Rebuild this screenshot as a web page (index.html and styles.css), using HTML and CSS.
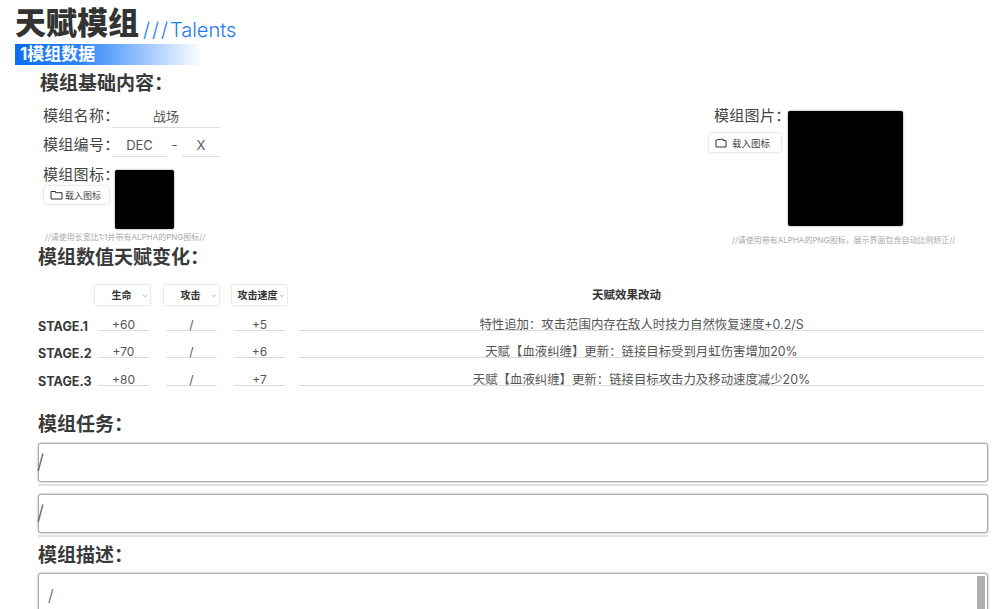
FILE: index.html
```html
<!DOCTYPE html>
<html lang="zh-CN">
  <head>
    <meta charset="UTF-8" />
    <title>天赋模组</title>
    <link rel="stylesheet" href="styles.css">
  </head>
  <body>
    <div class="page">
      <div class="title-row">
        <h1>天赋模组</h1>
        <span class="title-en"><span class="title-slashes">///</span>Talents</span>
      </div>
      <div class="section-bar">1模组数据</div>

      <h2 class="basic-title">模组基础内容：</h2>

      <div class="basic">
        <div class="basic-left">
          <div class="field-row">
            <span class="field-label">模组名称：</span>
            <span class="field-value name-field">战场</span>
          </div>
          <div class="field-row code-row">
            <span class="field-label">模组编号：</span>
            <span class="field-value dec-field">DEC</span>
            <span class="code-dash">-</span>
            <span class="field-value x-field">X</span>
          </div>
          <div class="icon-row">
            <div class="icon-side">
              <span class="field-label">模组图标：</span>
              <button class="load-btn small-btn">
                <svg width="13" height="10" viewBox="0 0 13 10"><path d="M1 9V1.5h4.5v1.2H12V9z" fill="none" stroke="#333" stroke-width="1"/></svg>
                载入图标
              </button>
            </div>
            <div class="black-box icon-box"></div>
          </div>
          <p class="hint icon-hint">//请使用长宽比1:1并带有ALPHA的PNG图标//</p>
        </div>

        <div class="basic-right">
          <div class="image-row">
            <div class="image-side">
              <span class="field-label">模组图片：</span>
              <button class="load-btn">
                <svg width="12" height="10" viewBox="0 0 12 10"><path d="M1 9V2l7-1v1.5h3V9z" fill="none" stroke="#333" stroke-width="1"/></svg>
                载入图标
              </button>
            </div>
            <div class="black-box image-box"></div>
          </div>
          <p class="hint image-hint">//请使用带有ALPHA的PNG图标，展示界面包含自动比例矫正//</p>
        </div>
      </div>

      <h2 class="stats-title">模组数值天赋变化：</h2>

      <div class="stats">
        <div class="stats-row stats-head">
          <span class="stage"></span>
          <div class="select">生命<i class="caret"></i></div>
          <div class="select">攻击<i class="caret"></i></div>
          <div class="select select-long">攻击速度<i class="caret"></i></div>
          <div class="effect-head">天赋效果改动</div>
        </div>
        <div class="stats-row">
          <span class="stage">STAGE.1</span>
          <span class="cell">+60</span>
          <span class="cell">/</span>
          <span class="cell">+5</span>
          <span class="cell effect">特性追加：攻击范围内存在敌人时技力自然恢复速度+0.2/S</span>
        </div>
        <div class="stats-row">
          <span class="stage">STAGE.2</span>
          <span class="cell">+70</span>
          <span class="cell">/</span>
          <span class="cell">+6</span>
          <span class="cell effect">天赋【血液纠缠】更新：链接目标受到月虹伤害增加20%</span>
        </div>
        <div class="stats-row">
          <span class="stage">STAGE.3</span>
          <span class="cell">+80</span>
          <span class="cell">/</span>
          <span class="cell">+7</span>
          <span class="cell effect">天赋【血液纠缠】更新：链接目标攻击力及移动速度减少20%</span>
        </div>
      </div>

      <h2 class="task-title">模组任务：</h2>
      <div class="text-box">/</div>
      <div class="box-line"></div>
      <div class="text-box">/</div>
      <div class="box-line"></div>

      <h2 class="desc-title">模组描述：</h2>
      <div class="desc-box">
        <span>/</span>
        <div class="scroll-thumb"></div>
      </div>
    </div>
  </body>
</html>
```

FILE: styles.css
```css
* {
  margin: 0;
  padding: 0;
  box-sizing: border-box;
}

html,
body {
  height: 609px;
  overflow: hidden;
}

body {
  font-family: Inter, "Noto Sans CJK SC", sans-serif;
  background: #fff;
  color: #3a3a3a;
}

.page {
  height: 609px;
  overflow: hidden;
  padding: 3px 12px 0 15px;
}

.title-row {
  display: flex;
  align-items: flex-end;
  height: 39px;
}

h1 {
  font-size: 31px;
  line-height: 39px;
  font-weight: 900;
  color: #333;
}

.title-en {
  font-size: 20px;
  line-height: 23px;
  font-weight: 300;
  color: #1a7cf0;
  margin-left: 4px;
}

.title-slashes {
  letter-spacing: 2px;
}

.section-bar {
  width: 187px;
  height: 21px;
  margin-top: 2px;
  padding-left: 5px;
  font-size: 17px;
  line-height: 21px;
  font-weight: 700;
  color: #fff;
  background: linear-gradient(90deg, #0a6cf5 0%, #2f86fa 35%, rgba(255, 255, 255, 0) 100%);
}

h2 {
  font-size: 19px;
  font-weight: 700;
  line-height: 24px;
  color: #3a3a3a;
}

.basic-title {
  margin: 7px 0 0 25px;
}

.basic {
  display: flex;
  justify-content: space-between;
  padding-left: 28px;
  padding-right: 31px;
}

.field-row {
  display: flex;
  align-items: flex-end;
  height: 30px;
  margin-top: 2px;
}

.field-row.code-row {
  height: 29px;
  margin-top: 0;
}

.field-label {
  font-size: 15px;
  line-height: 20px;
  letter-spacing: 0.3px;
  color: #444;
  white-space: nowrap;
}

.field-row .field-label {
  width: 69px;
  margin-bottom: 2px;
}

.field-value {
  height: 20px;
  font-size: 13px;
  line-height: 17px;
  text-align: center;
  color: #555;
  border-bottom: 1px solid #ddd;
}

.name-field {
  width: 108px;
}

.dec-field {
  width: 55px;
}

.code-dash {
  width: 15px;
  height: 20px;
  font-size: 13px;
  line-height: 17px;
  text-align: center;
  color: #555;
}

.x-field {
  width: 38px;
}

.icon-row {
  display: flex;
  margin-top: 13px;
}

.icon-side {
  display: flex;
  flex-direction: column;
  width: 72px;
  margin-top: -5px;
}

.load-btn {
  display: flex;
  align-items: center;
  gap: 5px;
  width: 72px;
  height: 19px;
  padding-left: 6px;
  font-family: inherit;
  font-size: 9.5px;
  color: #444;
  background: #fff;
  border: none;
  border-radius: 2px;
  box-shadow: 0 0 2px rgba(0, 0, 0, 0.3);
}

.small-btn {
  width: 65px;
  height: 18px;
  gap: 2px;
  margin: 1px 0 0 1px;
  font-size: 9px;
}

.black-box {
  background: #000;
  border-radius: 2px;
  box-shadow: 0 0 2px rgba(0, 0, 0, 0.5);
}

.icon-box {
  width: 59px;
  height: 59px;
}

.hint {
  font-size: 8px;
  line-height: 10px;
  color: #aaa;
  white-space: nowrap;
}

.icon-hint {
  margin: 3px 0 0 2px;
}

.basic-right {
  width: 248px;
  padding-top: 15px;
}

.image-row {
  display: flex;
}

.image-side {
  width: 79px;
  margin-top: -5px;
}

.image-side .field-label {
  display: block;
  margin: 0 0 7px 5px;
}

.image-box {
  width: 115px;
  height: 115px;
}

.image-hint {
  margin: 9px 0 0 23px;
}

.stats-title {
  margin: 1px 0 0 23px;
}

.stats {
  margin: 15px 0 0 23px;
}

.stats-row {
  display: flex;
  align-items: flex-end;
  height: 27.5px;
}

.stats-head {
  height: 20px;
  margin-bottom: -2px;
}

.stage {
  width: 60px;
  font-size: 12.6px;
  line-height: 15px;
  font-weight: 700;
  color: #3a3a3a;
  margin-bottom: -3px;
}

.select {
  position: relative;
  width: 55px;
  height: 20px;
  margin-left: -3px;
  margin-right: 16px;
  font-size: 10px;
  font-weight: 700;
  line-height: 20px;
  text-align: center;
  padding-right: 2px;
  color: #333;
  background: #fff;
  box-shadow: 0 0 2px rgba(0, 0, 0, 0.25);
}

.select:nth-child(2) {
  margin-right: 17px;
}

.select-long {
  margin-right: 12px;
  padding-right: 4px;
}

.caret {
  position: absolute;
  right: 3px;
  top: 8px;
  width: 4px;
  height: 4px;
  border-right: 1px solid #bbb;
  border-bottom: 1px solid #bbb;
  transform: rotate(45deg) scale(0.8);
}

.effect-head {
  width: 685px;
  margin-bottom: 3px;
  padding-right: 30px;
  font-size: 11.5px;
  font-weight: 700;
  line-height: 14px;
  text-align: center;
  color: #333;
}

.cell {
  width: 51px;
  margin-right: 17px;
  font-size: 12px;
  line-height: 11px;
  text-align: center;
  color: #555;
  border-bottom: 1px solid #ddd;
}

.cell:nth-child(4) {
  margin-right: 14px;
}

.cell.effect {
  width: 685px;
  margin-right: 0;
  font-size: 12.4px;
}

.task-title {
  margin: 27px 0 0 23px;
}

.desc-title {
  margin: 7px 0 0 23px;
}

.text-box {
  margin: 7px 0 0 24px;
  width: 948px;
  height: 37px;
  text-indent: -2px;
  font-size: 20px;
  font-weight: 300;
  line-height: 37px;
  color: #555;
  background: #fff;
  border-radius: 2px;
  box-shadow: 0 0 2px 1px rgba(0, 0, 0, 0.45);
}

.box-line {
  width: 950px;
  height: 2px;
  margin: 3px 0 0 23px;
  background: #e2e2e2;
}

.box-line + .text-box {
  margin-top: 9px;
}

.desc-box {
  position: relative;
  margin: 6px 0 0 24px;
  width: 948px;
  height: 60px;
  padding: 10px 0 0 9px;
  font-size: 16px;
  font-weight: 300;
  line-height: 22px;
  color: #555;
  border-radius: 2px;
  box-shadow: 0 0 2px 1px rgba(0, 0, 0, 0.45);
}

.scroll-thumb {
  position: absolute;
  top: 2px;
  right: 2px;
  width: 8px;
  height: 57px;
  background: #b0b0b0;
}
```
